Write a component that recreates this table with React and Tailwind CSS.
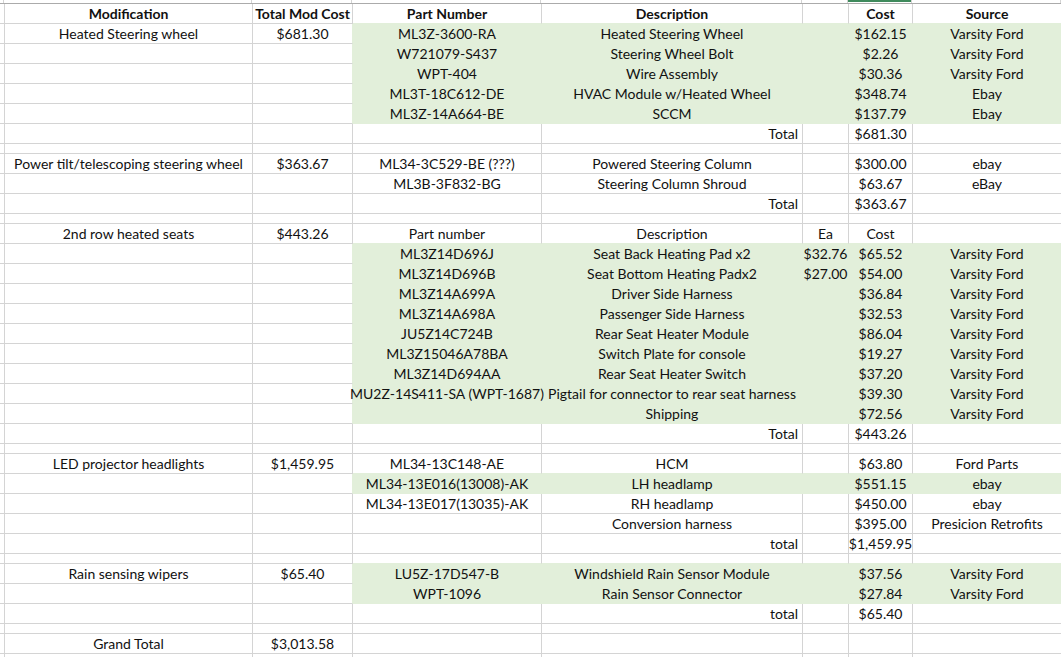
import React from "react";

const colW = [
  "w-[4px]",
  "w-[248px]",
  "w-[100px]",
  "w-[189px]",
  "w-[261px]",
  "w-[46px]",
  "w-[64px]",
  "w-[149px]",
];

const rows = [
  { h: 20, bold: true, cells: ["Modification", "Total Mod Cost", "Part Number", "Description", "", "Cost", "Source"] },
  { h: 20, green: true, cells: ["Heated Steering wheel", "$681.30", "ML3Z-3600-RA", "Heated Steering Wheel", "", "$162.15", "Varsity Ford"] },
  { h: 20, green: true, cells: ["", "", "W721079-S437", "Steering Wheel Bolt", "", "$2.26", "Varsity Ford"] },
  { h: 20, green: true, cells: ["", "", "WPT-404", "Wire Assembly", "", "$30.36", "Varsity Ford"] },
  { h: 20, green: true, cells: ["", "", "ML3T-18C612-DE", "HVAC Module w/Heated Wheel", "", "$348.74", "Ebay"] },
  { h: 20, green: true, cells: ["", "", "ML3Z-14A664-BE", "SCCM", "", "$137.79", "Ebay"] },
  { h: 20, total: true, cells: ["", "", "", "Total", "", "$681.30", ""] },
  { h: 10, cells: [] },
  { h: 20, cells: ["Power tilt/telescoping steering wheel", "$363.67", "ML34-3C529-BE (???)", "Powered Steering Column", "", "$300.00", "ebay"] },
  { h: 20, cells: ["", "", "ML3B-3F832-BG", "Steering Column Shroud", "", "$63.67", "eBay"] },
  { h: 20, total: true, cells: ["", "", "", "Total", "", "$363.67", ""] },
  { h: 10, cells: [] },
  { h: 20, cells: ["2nd row heated seats", "$443.26", "Part number", "Description", "Ea", "Cost", ""] },
  { h: 20, green: true, cells: ["", "", "ML3Z14D696J", "Seat Back Heating Pad x2", "$32.76", "$65.52", "Varsity Ford"] },
  { h: 20, green: true, cells: ["", "", "ML3Z14D696B", "Seat Bottom Heating Padx2", "$27.00", "$54.00", "Varsity Ford"] },
  { h: 20, green: true, cells: ["", "", "ML3Z14A699A", "Driver Side Harness", "", "$36.84", "Varsity Ford"] },
  { h: 20, green: true, cells: ["", "", "ML3Z14A698A", "Passenger Side Harness", "", "$32.53", "Varsity Ford"] },
  { h: 20, green: true, cells: ["", "", "JU5Z14C724B", "Rear Seat Heater Module", "", "$86.04", "Varsity Ford"] },
  { h: 20, green: true, cells: ["", "", "ML3Z15046A78BA", "Switch Plate for console", "", "$19.27", "Varsity Ford"] },
  { h: 20, green: true, cells: ["", "", "ML3Z14D694AA", "Rear Seat Heater Switch", "", "$37.20", "Varsity Ford"] },
  { h: 20, green: true, cells: ["", "", "MU2Z-14S411-SA (WPT-1687)", "Pigtail for connector to rear seat harness", "", "$39.30", "Varsity Ford"] },
  { h: 20, green: true, cells: ["", "", "", "Shipping", "", "$72.56", "Varsity Ford"] },
  { h: 20, total: true, cells: ["", "", "", "Total", "", "$443.26", ""] },
  { h: 10, cells: [] },
  { h: 20, cells: ["LED projector headlights", "$1,459.95", "ML34-13C148-AE", "HCM", "", "$63.80", "Ford Parts"] },
  { h: 20, green: true, cells: ["", "", "ML34-13E016(13008)-AK", "LH headlamp", "", "$551.15", "ebay"] },
  { h: 20, cells: ["", "", "ML34-13E017(13035)-AK", "RH headlamp", "", "$450.00", "ebay"] },
  { h: 20, cells: ["", "", "", "Conversion harness", "", "$395.00", "Presicion Retrofits"] },
  { h: 20, total: true, cells: ["", "", "", "total", "", "$1,459.95", ""] },
  { h: 10, cells: [] },
  { h: 20, green: true, cells: ["Rain sensing wipers", "$65.40", "LU5Z-17D547-B", "Windshield Rain Sensor Module", "", "$37.56", "Varsity Ford"] },
  { h: 20, green: true, cells: ["", "", "WPT-1096", "Rain Sensor Connector", "", "$27.84", "Varsity Ford"] },
  { h: 20, total: true, cells: ["", "", "", "total", "", "$65.40", ""] },
  { h: 10, cells: [] },
  { h: 20, cells: ["Grand Total", "$3,013.58", "", "", "", "", ""] },
  { h: 20, cells: [] },
];

// green fill covers columns C..G (3..7 in the 8-col layout, 0 = left strip)
const isGreen = (r, c) => !!(rows[r] && rows[r].green && c >= 3);

const Cell = ({ r, c, text, row }) => {
  const green = isGreen(r, c);
  const rightGreen = green || isGreen(r, c + 1);
  const bottomGreen = green || isGreen(r + 1, c);
  const alignRight = row.total && c === 4;
  return (
    <div
      className={[
        colW[c],
        "shrink-0 h-full border-r border-b flex items-end px-[2px] whitespace-nowrap",
        alignRight ? "justify-end pr-[4px]" : "justify-center",
        green ? "bg-[#e2efda]" : "bg-white",
        rightGreen ? "border-r-[#e2efda]" : "border-r-[#d4d4d4]",
        bottomGreen ? "border-b-[#e2efda]" : "border-b-[#d4d4d4]",
        row.bold ? "font-bold" : "",
      ].join(" ")}
    >
      {text && <span className="relative z-10">{text}</span>}
    </div>
  );
};

export default function App() {
  return (
    <div className="w-[1061px] h-[657px] overflow-hidden bg-white text-[#111] text-[14px] leading-[18px] font-['Lato',sans-serif]">
      {/* column header strip */}
      <div className="flex h-[4px] border-b border-b-[#ababab]">
        {colW.map((w, c) => (
          <div key={c} className={`${w} shrink-0 h-full border-r border-r-[#d4d4d4] flex items-start`}>
            {c === 6 && <div className="w-full h-[2px] bg-[#3f8a5c]" />}
          </div>
        ))}
      </div>
      {rows.map((row, r) => (
        <div key={r} className={`flex ${row.h === 10 ? "h-[10px]" : "h-[20px]"}`}>
          {colW.map((w, c) => (
            <Cell key={c} r={r} c={c} row={row} text={c === 0 ? "" : row.cells[c - 1] || ""} />
          ))}
        </div>
      ))}
    </div>
  );
}
